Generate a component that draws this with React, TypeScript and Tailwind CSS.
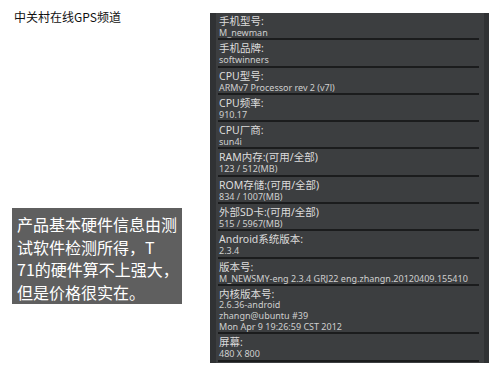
const rows = [
  { label: '手机型号:', value: ['M_newman'] },
  { label: '手机品牌:', value: ['softwinners'] },
  { label: 'CPU型号:', value: ['ARMv7 Processor rev 2 (v7l)'] },
  { label: 'CPU频率:', value: ['910.17'] },
  { label: 'CPU厂商:', value: ['sun4i'] },
  { label: 'RAM内存:(可用/全部)', value: ['123 / 512(MB)'] },
  { label: 'ROM存储:(可用/全部)', value: ['834 / 1007(MB)'] },
  { label: '外部SD卡:(可用/全部)', value: ['515 / 5967(MB)'] },
  { label: 'Android系统版本:', value: ['2.3.4'] },
  { label: '版本号:', value: ['M_NEWSMY-eng 2.3.4 GRJ22 eng.zhangn.20120409.155410'] },
  { label: '内核版本号:', value: ['2.6.36-android', 'zhangn@ubuntu #39', 'Mon Apr 9 19:26:59 CST 2012'] },
  { label: '屏幕:', value: ['480 X 800'] },
];

const InfoRow = ({ label, value }: { label: string; value: string[] }) => {
  const multi = value.length > 1;
  return (
    <div className="flex flex-col">
      <div className="pt-[2px] pl-[3px]">
        <div className="text-[10.5px] leading-[12px] text-[#dcdcdc] whitespace-nowrap">{label}</div>
        {value.map((v) => (
          <div
            key={v}
            className={`text-[9px] text-[#cfcfcf] whitespace-nowrap ${multi ? 'leading-[10.8px]' : 'leading-[11.3px]'}`}
          >
            {v}
          </div>
        ))}
      </div>
      <div className="ml-[2px] mr-[5px] h-[2px] bg-[#1b1c1d]" />
    </div>
  );
};

export default function App() {
  return (
    <div className="w-[500px] h-[375px] bg-white flex overflow-hidden">
      {/* Left column: caption + note */}
      <div className="w-[210px] pl-[12px] pt-[10px] flex flex-col">
        <div className="ml-[2px] text-[12px] leading-[14px] text-[#111] font-['Noto_Sans_CJK_SC',sans-serif]">
          中关村在线GPS频道
        </div>
        <div className="mt-[184px] w-[170px] h-[96px] bg-[#5f5f5f] pl-[5px] pt-[5px] text-white text-[16px] leading-[22.5px] whitespace-nowrap font-['Noto_Sans_CJK_SC',sans-serif]">
          产品基本硬件信息由测
          <br />
          试软件检测所得，T
          <br />
          71的硬件算不上强大，
          <br />
          但是价格很实在。
        </div>
      </div>

      {/* Phone screenshot */}
      <div className="mt-[13px] w-[279px] h-[350px] bg-[#303234] pl-[6px] pr-[5px] font-['Noto_Sans','Noto_Sans_CJK_SC',sans-serif]">
        <div className="h-full bg-[#3c3e40] flex flex-col">
          {rows.map((r) => (
            <InfoRow key={r.label} label={r.label} value={r.value} />
          ))}
        </div>
      </div>
    </div>
  );
}
